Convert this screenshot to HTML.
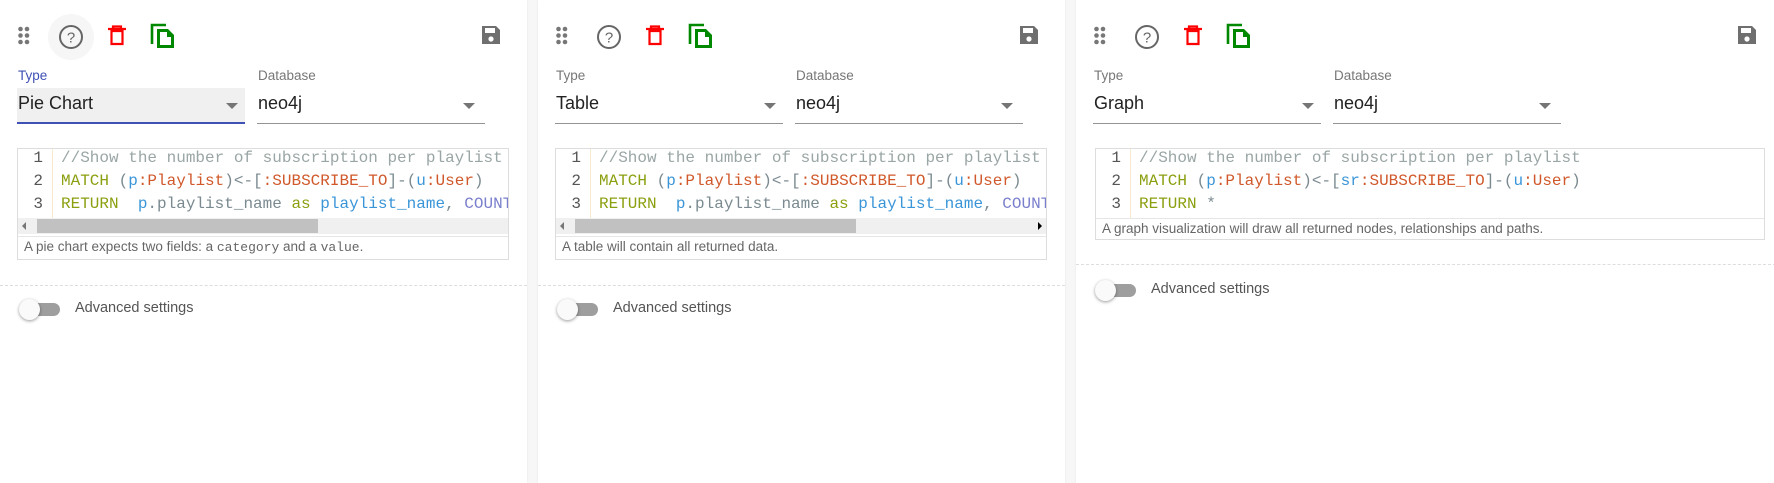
<!DOCTYPE html>
<html><head><meta charset="utf-8"><style>
*{margin:0;padding:0;box-sizing:border-box}
body{width:1774px;height:483px;overflow:hidden;background:#f7f7f7;font-family:"Liberation Sans",Arial,sans-serif;position:relative}
.p{position:absolute;top:0;height:483px;background:#fff;box-shadow:0 0 2px rgba(0,0,0,.08)}
.a{position:absolute}
.lbl{position:absolute;top:68px;font-size:13.5px;color:#777}
.fld{position:absolute;top:88px;height:36px;border-bottom:1px solid #949494}
.fld span{position:absolute;left:1px;top:5px;font-size:18px;color:#222}
.arr{position:absolute;top:15px;width:0;height:0;border-left:6px solid transparent;border-right:6px solid transparent;border-top:6px solid #757575}
.ed{position:absolute;top:148px;border:1px solid #ddd;overflow:hidden;background:#fff}
.gut{position:absolute;left:0;top:0;width:35px;border-right:1px solid #f6e9cc}
.ln{position:absolute;right:10px;font-family:"Liberation Mono",monospace;font-size:16px;color:#555}
.code{position:absolute;left:43px;font-family:"Liberation Mono",monospace;font-size:16px;white-space:pre;color:#7a8a90;line-height:23px}
.c{color:#9aa5a5}.k{color:#8c9f10}.v{color:#3a95d8}.l{color:#d0582a}.f{color:#7a7fcc}
.help{position:absolute;left:0;right:0;border-top:1px solid #e6e6e6;font-size:13.5px;color:#666;padding-left:6px;line-height:20px;background:#fff}
.help code{font-family:"Liberation Mono",monospace;font-size:13px}
.dash{position:absolute;left:0;right:0;border-top:1px dashed #ddd}
.tog{position:absolute;width:40px;height:13px;border-radius:7px;background:#9e9e9e}
.knob{position:absolute;left:-1px;top:-4px;width:21px;height:21px;border-radius:50%;background:#fafafa;box-shadow:0 1px 3px rgba(0,0,0,.4)}
.adv{position:absolute;font-size:14.5px;color:#555}
</style></head><body>

<div class="p" style="left:0;width:527px">
 <svg class="a" style="left:0;top:0" width="527" height="60">
  <g fill="#777"><circle cx="20.5" cy="29" r="2.3"/><circle cx="27" cy="29" r="2.3"/><circle cx="20.5" cy="35.5" r="2.3"/><circle cx="27" cy="35.5" r="2.3"/><circle cx="20.5" cy="42" r="2.3"/><circle cx="27" cy="42" r="2.3"/></g>
  <circle cx="71" cy="37" r="23" fill="#f6f6f6"/>
  <circle cx="71" cy="37" r="11" fill="none" stroke="#666" stroke-width="2"/>
  <text x="71" y="42.5" font-size="15" fill="#666" text-anchor="middle" font-family="Liberation Sans">?</text>
  <path d="M108 29h18M113 29v-2.5h8v2.5M111.5 31h11v13h-11z" fill="none" stroke="#f00" stroke-width="2.2"/>
  <path d="M152 44V25h14" fill="none" stroke="#080" stroke-width="2.6"/>
  <path d="M157 29h11l6 6v13h-17z" fill="#080"/><path d="M160 32h7v5h4v8h-11z" fill="#fff"/>
  <path d="M482 26h14l4 4v14h-18z" fill="#6f6f6f"/><rect x="485" y="28" width="10" height="5" fill="#fff"/><circle cx="491" cy="39" r="2.6" fill="#fff"/>
 </svg>
 <div class="lbl" style="left:18px;color:#3f51b5">Type</div>
 <div class="fld" style="left:17px;width:228px;background:#f0f0f0;border-bottom:2px solid #3f51b5"><span>Pie Chart</span><i class="arr" style="left:209px"></i></div>
 <div class="lbl" style="left:258px">Database</div>
 <div class="fld" style="left:257px;width:228px"><span>neo4j</span><i class="arr" style="left:206px"></i></div>
 <div class="ed" style="left:17px;width:492px;height:112px">
  <div class="gut" style="height:69px"></div>
  <div class="ln" style="top:-2px;left:0;width:25px;text-align:right;right:auto;line-height:23px">1<br>2<br>3</div>
  <div class="code" style="top:-2px"><span class="c">//Show the number of subscription per playlist</span>
<span class="k">MATCH</span> (<span class="v">p</span><span class="l">:Playlist</span>)&lt;-[<span class="l">:SUBSCRIBE_TO</span>]-(<span class="v">u</span><span class="l">:User</span>)
<span class="k">RETURN</span>  <span class="v">p</span>.playlist_name <span class="k">as</span> <span class="v">playlist_name</span>, <span class="f">COUNT</span></div>
  <div class="a" style="left:0;top:69px;width:492px;height:16px;background:#f0f0f0">
   <div class="a" style="left:4px;top:4px;border-top:4px solid transparent;border-bottom:4px solid transparent;border-right:4px solid #777"></div>
   <div class="a" style="left:19px;top:1px;width:281px;height:14px;background:#c1c1c1"></div>
  </div>
  <div class="help" style="top:87px">A pie chart expects two fields: a <code>category</code> and a <code>value</code>.</div>
 </div>
 <div class="dash" style="top:285px"></div>
 <div class="tog" style="left:20px;top:303px"><div class="knob"></div></div>
 <div class="adv" style="left:75px;top:300px">Advanced settings</div>
</div>

<div class="p" style="left:538px;width:527px">
 <svg class="a" style="left:0;top:0" width="527" height="60">
  <g fill="#777"><circle cx="20.5" cy="29" r="2.3"/><circle cx="27" cy="29" r="2.3"/><circle cx="20.5" cy="35.5" r="2.3"/><circle cx="27" cy="35.5" r="2.3"/><circle cx="20.5" cy="42" r="2.3"/><circle cx="27" cy="42" r="2.3"/></g>
  <circle cx="71" cy="37" r="11" fill="none" stroke="#666" stroke-width="2"/>
  <text x="71" y="42.5" font-size="15" fill="#666" text-anchor="middle" font-family="Liberation Sans">?</text>
  <path d="M108 29h18M113 29v-2.5h8v2.5M111.5 31h11v13h-11z" fill="none" stroke="#f00" stroke-width="2.2"/>
  <path d="M152 44V25h14" fill="none" stroke="#080" stroke-width="2.6"/>
  <path d="M157 29h11l6 6v13h-17z" fill="#080"/><path d="M160 32h7v5h4v8h-11z" fill="#fff"/>
  <path d="M482 26h14l4 4v14h-18z" fill="#6f6f6f"/><rect x="485" y="28" width="10" height="5" fill="#fff"/><circle cx="491" cy="39" r="2.6" fill="#fff"/>
 </svg>
 <div class="lbl" style="left:18px">Type</div>
 <div class="fld" style="left:17px;width:228px"><span>Table</span><i class="arr" style="left:209px"></i></div>
 <div class="lbl" style="left:258px">Database</div>
 <div class="fld" style="left:257px;width:228px"><span>neo4j</span><i class="arr" style="left:206px"></i></div>
 <div class="ed" style="left:17px;width:492px;height:112px">
  <div class="gut" style="height:69px"></div>
  <div class="ln" style="top:-2px;left:0;width:25px;text-align:right;right:auto;line-height:23px">1<br>2<br>3</div>
  <div class="code" style="top:-2px"><span class="c">//Show the number of subscription per playlist</span>
<span class="k">MATCH</span> (<span class="v">p</span><span class="l">:Playlist</span>)&lt;-[<span class="l">:SUBSCRIBE_TO</span>]-(<span class="v">u</span><span class="l">:User</span>)
<span class="k">RETURN</span>  <span class="v">p</span>.playlist_name <span class="k">as</span> <span class="v">playlist_name</span>, <span class="f">COUNT</span></div>
  <div class="a" style="left:0;top:69px;width:492px;height:16px;background:#f0f0f0">
   <div class="a" style="left:4px;top:4px;border-top:4px solid transparent;border-bottom:4px solid transparent;border-right:4px solid #777"></div>
   <div class="a" style="left:19px;top:1px;width:281px;height:14px;background:#c1c1c1"></div>
   <div class="a" style="right:6px;top:4px;border-top:4px solid transparent;border-bottom:4px solid transparent;border-left:4px solid #000"></div>
  </div>
  <div class="help" style="top:87px">A table will contain all returned data.</div>
 </div>
 <div class="dash" style="top:285px"></div>
 <div class="tog" style="left:20px;top:303px"><div class="knob"></div></div>
 <div class="adv" style="left:75px;top:300px">Advanced settings</div>
</div>

<div class="p" style="left:1076px;width:710px">
 <svg class="a" style="left:0;top:0" width="700" height="60">
  <g fill="#777"><circle cx="20.5" cy="29" r="2.3"/><circle cx="27" cy="29" r="2.3"/><circle cx="20.5" cy="35.5" r="2.3"/><circle cx="27" cy="35.5" r="2.3"/><circle cx="20.5" cy="42" r="2.3"/><circle cx="27" cy="42" r="2.3"/></g>
  <circle cx="71" cy="37" r="11" fill="none" stroke="#666" stroke-width="2"/>
  <text x="71" y="42.5" font-size="15" fill="#666" text-anchor="middle" font-family="Liberation Sans">?</text>
  <path d="M108 29h18M113 29v-2.5h8v2.5M111.5 31h11v13h-11z" fill="none" stroke="#f00" stroke-width="2.2"/>
  <path d="M152 44V25h14" fill="none" stroke="#080" stroke-width="2.6"/>
  <path d="M157 29h11l6 6v13h-17z" fill="#080"/><path d="M160 32h7v5h4v8h-11z" fill="#fff"/>
  <path d="M662 26h14l4 4v14h-18z" fill="#6f6f6f"/><rect x="665" y="28" width="10" height="5" fill="#fff"/><circle cx="671" cy="39" r="2.6" fill="#fff"/>
 </svg>
 <div class="lbl" style="left:18px">Type</div>
 <div class="fld" style="left:17px;width:228px"><span>Graph</span><i class="arr" style="left:209px"></i></div>
 <div class="lbl" style="left:258px">Database</div>
 <div class="fld" style="left:257px;width:228px"><span>neo4j</span><i class="arr" style="left:206px"></i></div>
 <div class="ed" style="left:19px;width:670px;height:92px">
  <div class="gut" style="height:69px"></div>
  <div class="ln" style="top:-2px;left:0;width:25px;text-align:right;right:auto;line-height:23px">1<br>2<br>3</div>
  <div class="code" style="top:-2px"><span class="c">//Show the number of subscription per playlist</span>
<span class="k">MATCH</span> (<span class="v">p</span><span class="l">:Playlist</span>)&lt;-[<span class="v">sr</span><span class="l">:SUBSCRIBE_TO</span>]-(<span class="v">u</span><span class="l">:User</span>)
<span class="k">RETURN</span> *</div>
  <div class="help" style="top:69px">A graph visualization will draw all returned nodes, relationships and paths.</div>
 </div>
 <div class="dash" style="top:264px"></div>
 <div class="tog" style="left:20px;top:284px"><div class="knob"></div></div>
 <div class="adv" style="left:75px;top:281px">Advanced settings</div>
</div>
</body></html>
